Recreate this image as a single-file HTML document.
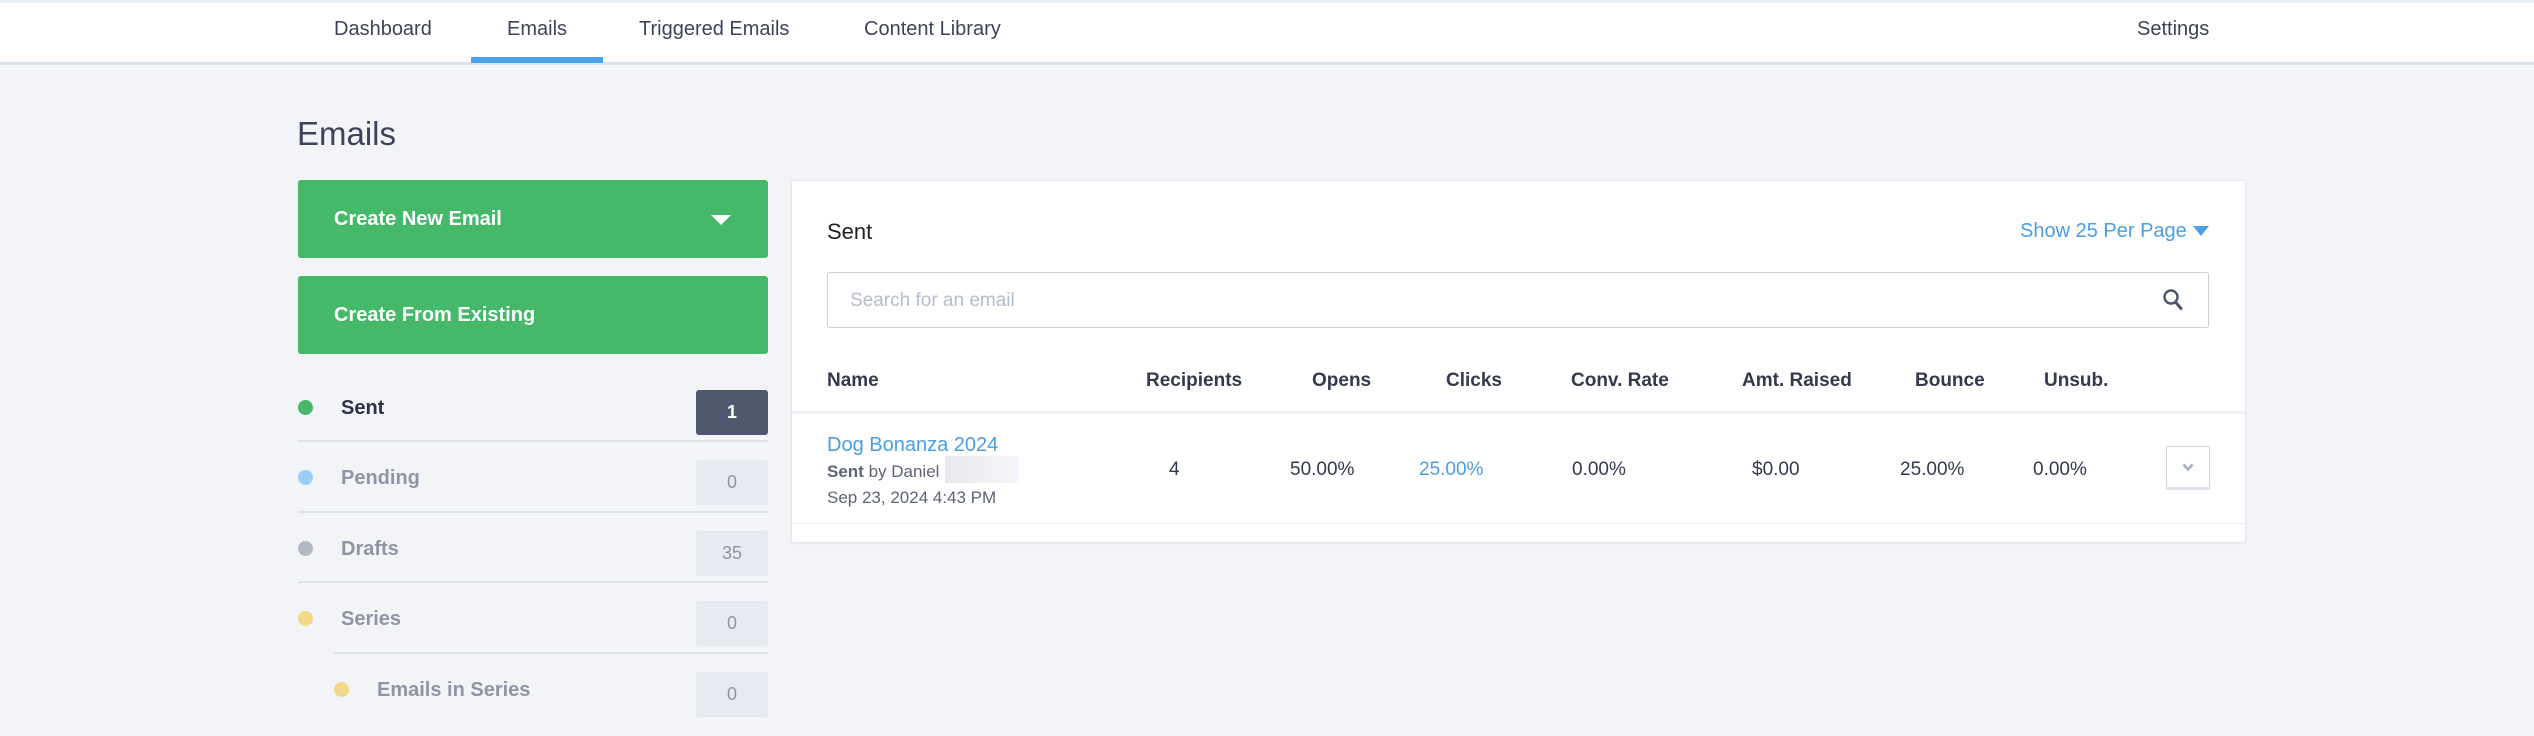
<!DOCTYPE html>
<html><head><meta charset="utf-8"><style>
*{margin:0;padding:0;box-sizing:border-box}
body{width:2534px;height:736px;background:#f3f4f8;font-family:"Liberation Sans",sans-serif;position:relative;overflow:hidden;color:#333a4d}
.a{position:absolute;white-space:nowrap}
.nav{position:absolute;left:0;top:0;width:2534px;height:62px;background:#fff;border-top:3px solid #eaf0f7}
.navb{position:absolute;left:0;top:62px;width:2534px;height:3px;background:#dbe1ea}
.nt{font-size:20px;color:#3d4459;top:18px}
.btn{position:absolute;left:298px;width:470px;height:78px;background:#45b86a;border-radius:3px;color:#fff;font-weight:bold;font-size:20px;padding:0 0 0 36px;line-height:78px}
.dot{position:absolute;width:15px;height:15px;border-radius:50%}
.lt{font-size:20px;color:#8f95a4;font-weight:bold}
.badge{position:absolute;left:696px;width:72px;height:45px;background:#e6eaf1;border-radius:3px;text-align:center;line-height:45px;font-size:18px;color:#8f95a4}
.sep{position:absolute;height:2px;background:#dde2ea}
.th{font-size:19px;font-weight:bold;color:#333a4d;top:370px}
.td{font-size:19px;color:#333a4d;top:459px}
</style></head><body>
<div class="nav"></div><div class="navb"></div>
<div class="a nt" style="left:334px">Dashboard</div>
<div class="a nt" style="left:507px">Emails</div>
<div class="a nt" style="left:639px">Triggered Emails</div>
<div class="a nt" style="left:864px">Content Library</div>
<div class="a nt" style="left:2137px">Settings</div>
<div class="a" style="left:471px;top:57px;width:132px;height:6px;background:#4aa3ea"></div>

<div class="a" style="left:297px;top:115px;font-size:33px;color:#3d4459;font-weight:300">Emails</div>
<div class="btn" style="top:180px">Create New Email<span class="a" style="left:413px;top:35px;width:0;height:0;border-left:10px solid transparent;border-right:10px solid transparent;border-top:10px solid #fff"></span></div>
<div class="btn" style="top:276px">Create From Existing</div>

<div class="dot" style="left:298px;top:400px;background:#45b86a"></div>
<div class="a lt" style="left:341px;top:397px;color:#2d3345">Sent</div>
<div class="badge" style="top:390px;background:#4d576d;color:#fff;font-weight:bold">1</div>
<div class="sep" style="left:298px;top:440px;width:470px"></div>

<div class="dot" style="left:298px;top:470px;background:#9ccdf7"></div>
<div class="a lt" style="left:341px;top:467px">Pending</div>
<div class="badge" style="top:460px">0</div>
<div class="sep" style="left:298px;top:511px;width:470px"></div>

<div class="dot" style="left:298px;top:541px;background:#b3b8c6"></div>
<div class="a lt" style="left:341px;top:538px">Drafts</div>
<div class="badge" style="top:531px">35</div>
<div class="sep" style="left:298px;top:581px;width:470px"></div>

<div class="dot" style="left:298px;top:611px;background:#f4d98a"></div>
<div class="a lt" style="left:341px;top:608px">Series</div>
<div class="badge" style="top:601px">0</div>
<div class="sep" style="left:334px;top:652px;width:434px"></div>

<div class="dot" style="left:334px;top:682px;background:#f4d98a"></div>
<div class="a lt" style="left:377px;top:679px">Emails in Series</div>
<div class="badge" style="top:672px">0</div>

<div class="a" style="left:791px;top:180px;width:1455px;height:363px;background:#fff;border:1px solid #e3e7ee;border-radius:3px;box-shadow:0 1px 2px rgba(0,0,0,.06)"></div>
<div class="a" style="left:827px;top:219px;font-size:22px;color:#222">Sent</div>
<div class="a" style="left:2020px;top:220px;font-size:20px;color:#4a9ee6">Show 25 Per Page</div>
<div class="a" style="left:2193px;top:226px;width:0;height:0;border-left:8px solid transparent;border-right:8px solid transparent;border-top:10px solid #4a9ee6"></div>
<div class="a" style="left:827px;top:272px;width:1382px;height:56px;border:1px solid #c9ced7;border-radius:3px"></div>
<div class="a" style="left:850px;top:290px;font-size:19px;color:#b5bccb">Search for an email</div>
<svg class="a" style="left:2162px;top:288px" width="22" height="24" viewBox="0 0 22 24"><circle cx="9" cy="9" r="6.5" fill="none" stroke="#4d566b" stroke-width="2.4"/><path d="M13.5 14 L19 20.5" stroke="#4d566b" stroke-width="3" stroke-linecap="round"/></svg>

<div class="a th" style="left:827px">Name</div>
<div class="a th" style="left:1146px">Recipients</div>
<div class="a th" style="left:1312px">Opens</div>
<div class="a th" style="left:1446px">Clicks</div>
<div class="a th" style="left:1571px">Conv. Rate</div>
<div class="a th" style="left:1742px">Amt. Raised</div>
<div class="a th" style="left:1915px">Bounce</div>
<div class="a th" style="left:2044px">Unsub.</div>
<div class="a" style="left:792px;top:411px;width:1453px;height:3px;background:#eef0f4"></div>

<div class="a" style="left:827px;top:434px;font-size:20px;color:#4a9ee6">Dog Bonanza 2024</div>
<div class="a" style="left:827px;top:462px;font-size:17px;color:#5d6475"><b>Sent</b> by Daniel</div>
<div class="a" style="left:945px;top:456px;width:74px;height:27px;background:linear-gradient(90deg,#e8e9ee,#f4f5f8)"></div>
<div class="a" style="left:827px;top:488px;font-size:17px;color:#5d6475">Sep 23, 2024 4:43 PM</div>
<div class="a td" style="left:1169px">4</div>
<div class="a td" style="left:1290px">50.00%</div>
<div class="a td" style="left:1419px;color:#4a9ee6">25.00%</div>
<div class="a td" style="left:1572px">0.00%</div>
<div class="a td" style="left:1752px">$0.00</div>
<div class="a td" style="left:1900px">25.00%</div>
<div class="a td" style="left:2033px">0.00%</div>
<div class="a" style="left:2166px;top:446px;width:44px;height:44px;border:1px solid #cdd2db;border-bottom:3px solid #dde2ea;border-radius:2px;background:#fff"></div>
<svg class="a" style="left:2182px;top:463px" width="12" height="9" viewBox="0 0 12 9"><path d="M1.5 1.5 L6 6.5 L10.5 1.5" fill="none" stroke="#a9b0c0" stroke-width="2.6"/></svg>
<div class="a" style="left:792px;top:523px;width:1453px;height:1px;background:#eceef2"></div>
</body></html>
